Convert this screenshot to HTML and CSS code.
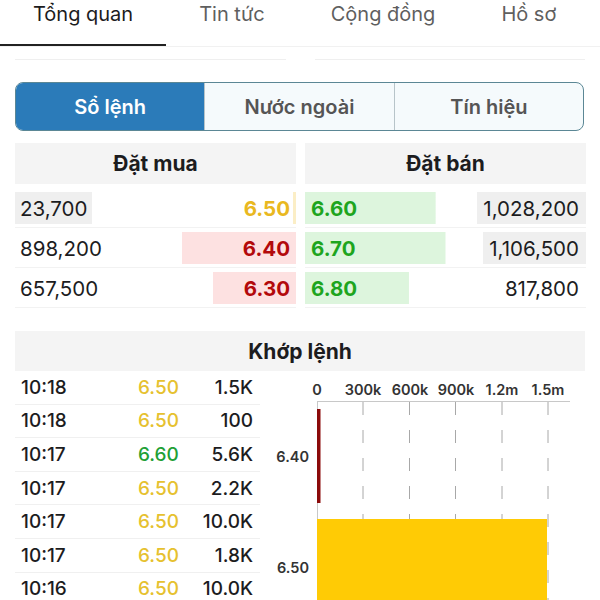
FILE: index.html
```html
<!DOCTYPE html>
<html lang="vi">
<head>
    <meta charset="UTF-8">
    <meta name="viewport" content="width=device-width, initial-scale=1.0">
    <title>Sổ lệnh</title>
    <link rel="stylesheet" href="styles.css">
</head>
<body>
    <nav class="tabs">
        <a class="tab active" href="#">Tổng quan</a>
        <a class="tab" href="#">Tin tức</a>
        <a class="tab" href="#">Cộng đồng</a>
        <a class="tab" href="#">Hồ sơ</a>
    </nav>

    <div class="strip">
        <div></div>
        <div></div>
    </div>

    <div class="segment">
        <div class="seg active">Sổ lệnh</div>
        <div class="seg">Nước ngoài</div>
        <div class="seg">Tín hiệu</div>
    </div>

    <!-- Order book: bar width = volume / 2,210,000 -->
    <div class="orderbook">
        <div class="side bid">
            <div class="side-head">Đặt mua</div>
            <div class="ob-row">
                <div class="ob-cell ref-bar" style="--w: 1.1%">
                    <span class="qty hl">23,700</span>
                    <span class="price ref">6.50</span>
                </div>
            </div>
            <div class="ob-row">
                <div class="ob-cell" style="--w: 40.6%">
                    <span class="qty">898,200</span>
                    <span class="price down">6.40</span>
                </div>
            </div>
            <div class="ob-row">
                <div class="ob-cell" style="--w: 29.7%">
                    <span class="qty">657,500</span>
                    <span class="price down">6.30</span>
                </div>
            </div>
        </div>

        <div class="side ask">
            <div class="side-head">Đặt bán</div>
            <div class="ob-row">
                <div class="ob-cell" style="--w: 46.5%">
                    <span class="price up">6.60</span>
                    <span class="qty hl">1,028,200</span>
                </div>
            </div>
            <div class="ob-row">
                <div class="ob-cell" style="--w: 50%">
                    <span class="price up">6.70</span>
                    <span class="qty hl">1,106,500</span>
                </div>
            </div>
            <div class="ob-row">
                <div class="ob-cell" style="--w: 37%">
                    <span class="price up">6.80</span>
                    <span class="qty">817,800</span>
                </div>
            </div>
        </div>
    </div>

    <div class="match">
        <div class="match-head">Khớp lệnh</div>
        <div class="match-body">
            <div class="trades">
                <div class="trade"><span>10:18</span><span class="ref">6.50</span><span class="vol">1.5K</span></div>
                <div class="trade"><span>10:18</span><span class="ref">6.50</span><span class="vol">100</span></div>
                <div class="trade"><span>10:17</span><span class="up">6.60</span><span class="vol">5.6K</span></div>
                <div class="trade"><span>10:17</span><span class="ref">6.50</span><span class="vol">2.2K</span></div>
                <div class="trade"><span>10:17</span><span class="ref">6.50</span><span class="vol">10.0K</span></div>
                <div class="trade"><span>10:17</span><span class="ref">6.50</span><span class="vol">1.8K</span></div>
                <div class="trade"><span>10:16</span><span class="ref">6.50</span><span class="vol">10.0K</span></div>
            </div>

            <svg class="chart" width="325" height="229" viewBox="0 0 325 229">
                <g class="axis-labels">
                    <text x="57" y="24">0</text>
                    <text x="103" y="24">300k</text>
                    <text x="150" y="24">600k</text>
                    <text x="196" y="24">900k</text>
                    <text x="242" y="24">1.2m</text>
                    <text x="288" y="24">1.5m</text>
                </g>
                <g class="grid">
                    <line x1="103" y1="31" x2="103" y2="229"/>
                    <line x1="149.5" y1="31" x2="149.5" y2="229"/>
                    <line x1="195.5" y1="31" x2="195.5" y2="229"/>
                    <line x1="242" y1="31" x2="242" y2="229"/>
                    <line x1="288" y1="31" x2="288" y2="229"/>
                </g>
                <line class="axis" x1="57" y1="30.5" x2="310" y2="30.5"/>
                <line class="axis" x1="57.5" y1="30" x2="57.5" y2="229"/>

                <rect x="57" y="38" width="3.5" height="94" fill="#8b0b0b"/>
                <rect x="57" y="148" width="230" height="90" fill="#ffcb05"/>

                <g class="bar-labels">
                    <text x="49" y="91">6.40</text>
                    <text x="49" y="202">6.50</text>
                </g>
            </svg>
        </div>
    </div>
</body>
</html>
```

FILE: styles.css
```css
* {
    box-sizing: border-box;
}

body {
    margin: 0;
    background: #fff;
    color: #1c1c1e;
    font-family: Inter, "Noto Sans", sans-serif;
}

/* top tabs */
.tabs {
    display: flex;
    height: 47px;
    border-bottom: 1px solid #f1f1f1;
}

.tab {
    height: 46px;
    padding: 0 33px;
    font-size: 20px;
    line-height: 28px;
    color: #5f5f5f;
    text-decoration: none;
}

.tab.active {
    color: #1c1c1e;
    border-bottom: 2px solid #222;
}

.strip {
    display: grid;
    grid-template-columns: 1fr 1fr;
    gap: 29px;
    padding: 12px 15px 0;
}

.strip div {
    border-top: 1px solid #efefef;
}

/* segmented control */
.segment {
    display: flex;
    height: 49px;
    margin: 22px 16px 0 15px;
    border: 1.5px solid #5b8795;
    border-radius: 8px;
    overflow: hidden;
    background: #f5fafc;
}

.seg {
    flex: 1;
    display: flex;
    align-items: center;
    justify-content: center;
    font-size: 20px;
    font-weight: 600;
    color: #555;
    border-left: 1px solid #b7c4c9;
}

.seg:first-child {
    border-left: none;
}

.seg.active {
    background: #2b7bb9;
    color: #fff;
}

/* order book */
.orderbook {
    display: grid;
    grid-template-columns: 1fr 1fr;
    gap: 9px;
    margin: 12px 14px 0 15px;
}

.side-head {
    height: 41px;
    margin-bottom: 4px;
    display: flex;
    align-items: center;
    justify-content: center;
    background: #f4f4f4;
    font-size: 21px;
    font-weight: 700;
}

.ob-row {
    padding: 4px 0 3px;
    border-bottom: 1px solid #f2f2f2;
}

.ob-cell {
    height: 32px;
    display: flex;
    align-items: center;
    justify-content: space-between;
    font-size: 20.5px;
    background-image: linear-gradient(var(--bar), var(--bar));
    background-repeat: no-repeat;
    background-size: var(--w) 100%;
}

.bid .ob-cell {
    --bar: #fde1e1;
    background-position: right;
}

.bid .ob-cell.ref-bar {
    --bar: #fbeec6;
}

.ask .ob-cell {
    --bar: #ddf5dd;
    background-position: left;
}

.qty {
    height: 100%;
    display: flex;
    align-items: center;
    padding: 0 5px;
}

.ask .qty {
    padding: 0 7px 0 6px;
}

.qty.hl {
    background: #efefef;
}

.price {
    padding: 0 6px;
    font-weight: 700;
}

.up {
    color: #1ea51e;
}

.down {
    color: #b3090b;
}

.ref {
    color: #e9b820;
}

/* matched orders */
.match {
    margin: 23px 15px 0;
}

.match-head {
    height: 40px;
    display: flex;
    align-items: center;
    justify-content: center;
    background: #f4f4f4;
    font-size: 21px;
    font-weight: 700;
}

.match-body {
    display: flex;
}

.trades {
    width: 245px;
    flex-shrink: 0;
}

.trade {
    display: grid;
    grid-template-columns: 123px 60px 1fr;
    align-items: center;
    height: 33.6px;
    border-bottom: 1px solid #f0f0f0;
    font-size: 19px;
    font-weight: 500;
}

.trade span:first-child {
    padding-left: 6px;
}

.trade .ref {
    color: #e6c12f;
}

.trade .up {
    color: #21a035;
}

.trade .vol {
    text-align: right;
    padding-right: 7px;
}

.chart {
    display: block;
    flex-shrink: 0;
}

.axis-labels text {
    font-size: 14.5px;
    font-weight: 600;
    fill: #333;
    text-anchor: middle;
}

.bar-labels text {
    font-size: 14.5px;
    font-weight: 600;
    fill: #333;
    text-anchor: end;
}

.grid line {
    stroke: #a8a8a8;
    stroke-dasharray: 13 15;
}

.axis {
    stroke: #c8c8c8;
}
```
